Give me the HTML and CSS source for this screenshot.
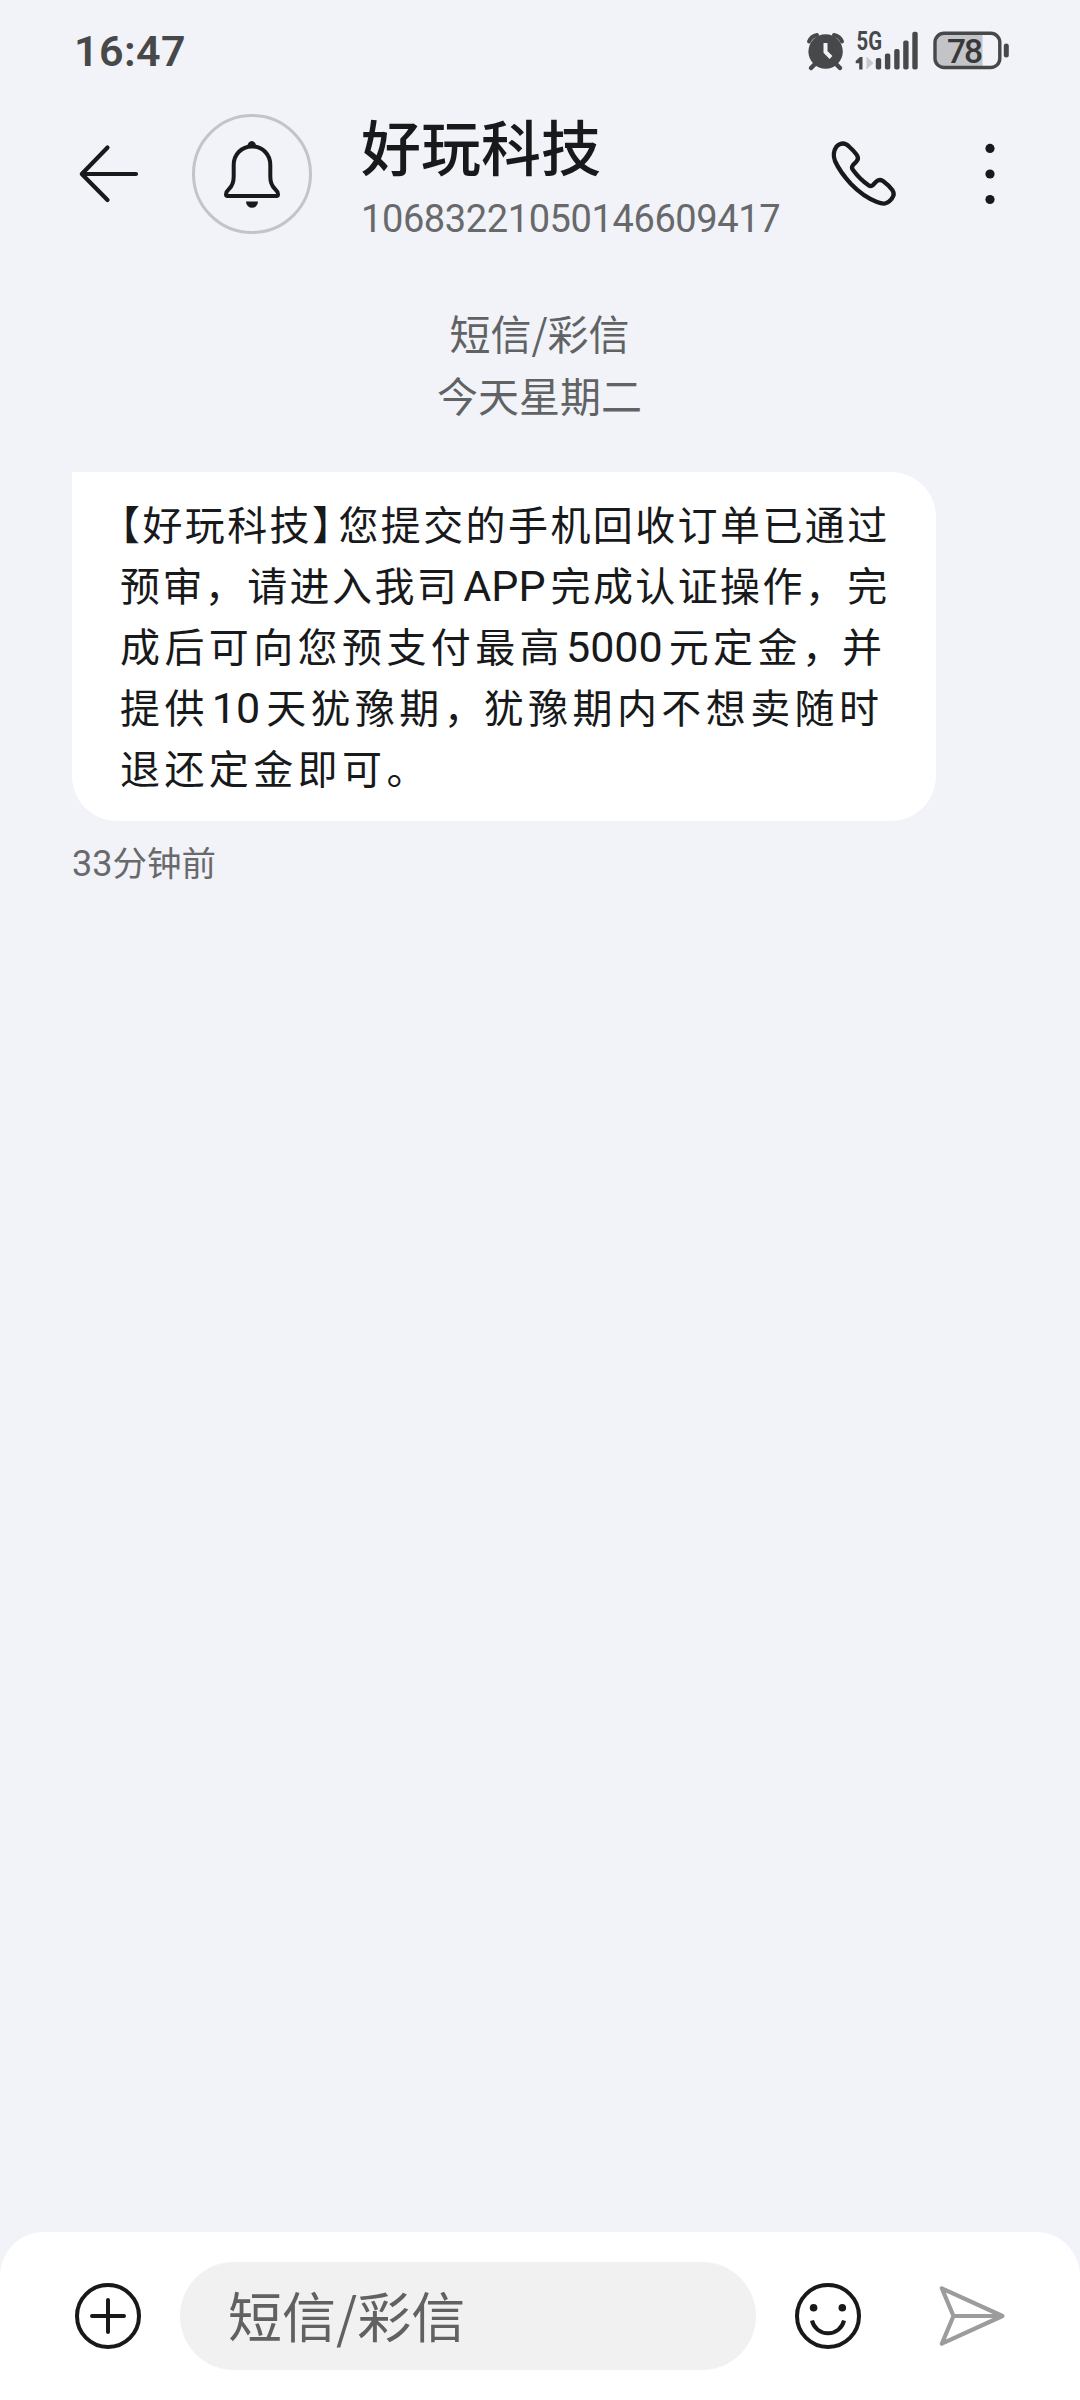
FILE: index.html
```html
<!DOCTYPE html>
<html lang="zh-CN">
<head>
<meta charset="utf-8">
<title>好玩科技</title>
<link rel="stylesheet" href="styles.css">
</head>
<body>
<div class="screen">
  <div class="status">
    <span class="clock">16:47</span>
    <svg class="status-icons" width="204" height="60" viewBox="806 21 204 60">
      <g fill="none" stroke="#47484a" stroke-linecap="round">
        <path stroke-width="4" d="M809 41.500a11 11 0 0 1 8-6.500M842 41.500a11 11 0 0 0-8-6.500"/>
        <path stroke-width="4.500" d="M815 64l-4 4M836 64l4 4"/>
      </g>
      <circle cx="825.600" cy="51.500" r="17.200" fill="#47484a"/>
      <path d="M825.500 43v9l5.500 5.500" fill="none" stroke="#f1f3f8" stroke-width="4"/>
      <text class="net" x="856.500" y="50.300" textLength="25.500" lengthAdjust="spacingAndGlyphs">5G</text>
      <path d="M862.500 57v12.500h-3.300v-6.300h-3.500v-2.200l4.300-4z" fill="#47484a"/>
      <path d="M866.500 56.500l7 6.500-7 6.500z" fill="#c8c9cc"/>
      <g fill="#47484a">
        <rect x="875.800" y="58" width="5.400" height="11.500" rx="2"/>
        <rect x="884.900" y="53.500" width="5.400" height="16" rx="2"/>
        <rect x="894.200" y="49" width="5.400" height="20.500" rx="2"/>
        <rect x="903.200" y="40.500" width="5.400" height="29" rx="2"/>
        <rect x="912.300" y="31.700" width="5.400" height="37.800" rx="2"/>
        <rect x="1003.800" y="43.500" width="5" height="14" rx="2.500"/>
      </g>
      <path d="M982.500 33.500v34h-38a9.500 9.500 0 0 1-9.500-9.500v-15a9.500 9.500 0 0 1 9.500-9.500z" fill="#c3c4c7"/>
      <rect x="935" y="33.300" width="64.800" height="34.200" rx="9" fill="none" stroke="#47484a" stroke-width="3.400"/>
      <text class="level" x="947" y="62.500" textLength="36">78</text>
    </svg>
  </div>

  <header class="bar">
    <svg class="back" width="62" height="60" viewBox="78 144 62 60" fill="none" stroke="#18191b" stroke-width="4.200" stroke-linecap="round" stroke-linejoin="round">
      <path d="M107.500 147.500L81.800 174l25.700 26M82 174h54"/>
    </svg>
    <div class="avatar">
      <svg width="58" height="70" viewBox="223 139 58 70">
        <path d="M233.700 165C233.700 154.500 241.500 146.400 252 146.400S270.300 154.500 270.300 165V176.500C270.300 182.500 271.800 186 275 189C277.200 191 278 192.200 278 194.200C278 195.500 277.600 196 276.500 196H227.500C226.400 196 226 195.500 226 194.200C226 192.200 226.800 191 229 189C232.200 186 233.700 182.500 233.700 176.500Z" fill="none" stroke="#18191b" stroke-width="4" stroke-linejoin="round"/>
        <path d="M247.500 146.500a4.300 5.500 0 0 1 8.600 0zM246 201.500h12a6 6.300 0 0 1-12 0z" fill="#18191b"/>
      </svg>
    </div>
    <div class="contact">
      <h1 class="name">好玩科技</h1>
      <div class="number">10683221050146609417</div>
    </div>
    <svg class="call" width="68" height="68" viewBox="830 140 68 68" fill="none" stroke="#18191b" stroke-width="4.300" stroke-linejoin="round">
      <path d="M836.500 146.500Q843 140.500 849 146.500Q853 150 856.500 154.500Q859.500 158.500 856 162L853 165Q851 167.500 853 170Q860 179.500 868.500 185.200Q871 187 873 185L875.800 182Q879 178.500 883 181Q888.500 185 892.300 190Q895.300 194.500 891.500 199Q888.500 202.800 885 203.500Q882 204 877 202Q863 196.500 851 184Q840 172 835 161Q832 153 836.500 146.500Z"/>
    </svg>
    <svg class="more" width="20" height="68" viewBox="980 140 20 68" fill="#18191b">
      <circle cx="990" cy="148.400" r="4.600"/><circle cx="990" cy="174" r="4.600"/><circle cx="990" cy="199.500" r="4.600"/>
    </svg>
  </header>

  <main class="thread">
    <div class="day">
      <div class="kind">短信/彩信</div>
      <div class="date">今天星期二</div>
    </div>
    <div class="bubble">
      <div class="line tight"><span class="half">【</span>好玩科技<span class="half close">】</span>您提交的手机回收订单已通过</div>
      <div class="line tight">预审，请进入我司<span class="latin app">APP</span>完成认证操作，完</div>
      <div class="line loose">成后可向您预支付最高<span class="latin">5000</span>元定金<span class="comma">，</span>并</div>
      <div class="line loose">提供<span class="latin ten">10</span>天犹豫期<span class="comma">，</span>犹豫期内不想卖随时</div>
      <div class="line loose">退还定金即可。</div>
    </div>
    <div class="ago"><span class="count">33</span>分钟前</div>
  </main>

  <footer class="composer">
    <svg class="add" width="68" height="68" viewBox="0 0 68 68" fill="none" stroke="#18191b" stroke-width="4">
      <circle cx="34" cy="34" r="31"/><path d="M18 34h32M34 18v32" stroke-linecap="round"/>
    </svg>
    <div class="field">短信/彩信</div>
    <svg class="emoji" width="68" height="68" viewBox="0 0 68 68" fill="none" stroke="#18191b" stroke-width="4">
      <circle cx="34" cy="34" r="31"/><path d="M18 38.500a16.400 16.400 0 0 0 32 0"/>
      <g fill="#18191b" stroke="none"><circle cx="19.600" cy="25.700" r="3.800"/><circle cx="48.300" cy="25.700" r="3.800"/></g>
    </svg>
    <svg class="send" width="68" height="64" viewBox="938 2284 68 64" fill="none" stroke="#9c9c9c" stroke-width="4.200" stroke-linejoin="round">
      <path d="M941.800 2288.300L1002.500 2316l-60.700 27.700L953.500 2316zM953.500 2316h49"/>
    </svg>
  </footer>
</div>
</body>
</html>
```
FILE: styles.css
```css
* { box-sizing: border-box; }
body { margin: 0; background: #f1f3f8; }
svg { display: block; flex: none; overflow: visible; }

.screen {
  width: 1080px;
  height: 2400px;
  display: flex;
  flex-direction: column;
  overflow: hidden;
  background: #f1f3f8;
  color: #18191b;
  font-family: Roboto, "Noto Sans CJK SC", sans-serif;
  white-space: nowrap;
}

.status {
  height: 102px;
  padding: 0 70px 0 74px;
  display: flex;
  align-items: center;
  justify-content: space-between;
}
.clock { font-size: 43px; font-weight: 600; color: #47484a; letter-spacing: .4px; line-height: 102px; }
.net { font-size: 25px; font-weight: 700; fill: #47484a; }
.level { font-size: 33.500px; font-weight: 500; fill: #37383a; }

.bar {
  height: 144px;
  display: flex;
  align-items: center;
  padding: 0 80px 0 78px;
}
.avatar {
  width: 120px;
  height: 120px;
  margin-left: 52px;
  border: 3px solid #c3c4c8;
  border-radius: 50%;
  display: flex;
  align-items: center;
  justify-content: center;
}
.contact { align-self: flex-start; margin-left: 49px; width: 469px; padding-top: 10px; }
.name {
  margin: 0;
  font-family: "Noto Sans CJK SC", sans-serif;
  font-size: 60px;
  font-weight: 500;
  line-height: 66px;
}
.number { margin-top: 14px; font-size: 38px; color: #68696b; line-height: 54px; letter-spacing: -.4px; }
.more { margin-left: 82px; }

.thread { flex: 1; padding-left: 72px; }
.day {
  margin: 55px 73px 0 0;
  text-align: center;
  font-family: "Noto Sans CJK SC", sans-serif;
  font-size: 41px;
  line-height: 62px;
  color: #616264;
}
.bubble {
  margin-top: 47px;
  width: 864px;
  height: 349px;
  padding: 21px 48px;
  background: #fff;
  border-radius: 0 45px 45px 45px;
  font-family: "Noto Sans CJK SC", sans-serif;
  font-size: 40px;
}
.line { height: 61px; line-height: 61px; }
.tight { letter-spacing: 2.400px; }
.loose { letter-spacing: 4.400px; }
.half { font-feature-settings: "halt"; }
.close { margin-right: 4px; }
.latin { font-family: Roboto, sans-serif; font-size: 43px; letter-spacing: 0; margin: 0 6px 0 2px; }
.app { margin: 0 5px 0 4px; }
.ten { margin-left: 3px; }
.comma { letter-spacing: 0; }
.ago {
  margin-top: 12px;
  font-family: "Noto Sans CJK SC", sans-serif;
  font-size: 34.500px;
  line-height: 56px;
  color: #68696b;
}
.count { font-family: Roboto, sans-serif; font-size: 36px; }

.composer {
  height: 168px;
  display: flex;
  align-items: flex-start;
  padding: 30px 74px 0;
  background: #fff;
  border-radius: 44px 44px 0 0;
}
.add, .emoji { margin-top: 20px; }
.field {
  margin-left: 38px;
  width: 576px;
  height: 108px;
  padding-left: 48px;
  border-radius: 54px;
  background: #f1f1f1;
  color: #616161;
  font-family: "Noto Sans CJK SC", sans-serif;
  font-size: 54px;
  line-height: 105px;
}
.emoji { margin-left: 38px; }
.send { margin: 22px 0 0 76px; }
```
